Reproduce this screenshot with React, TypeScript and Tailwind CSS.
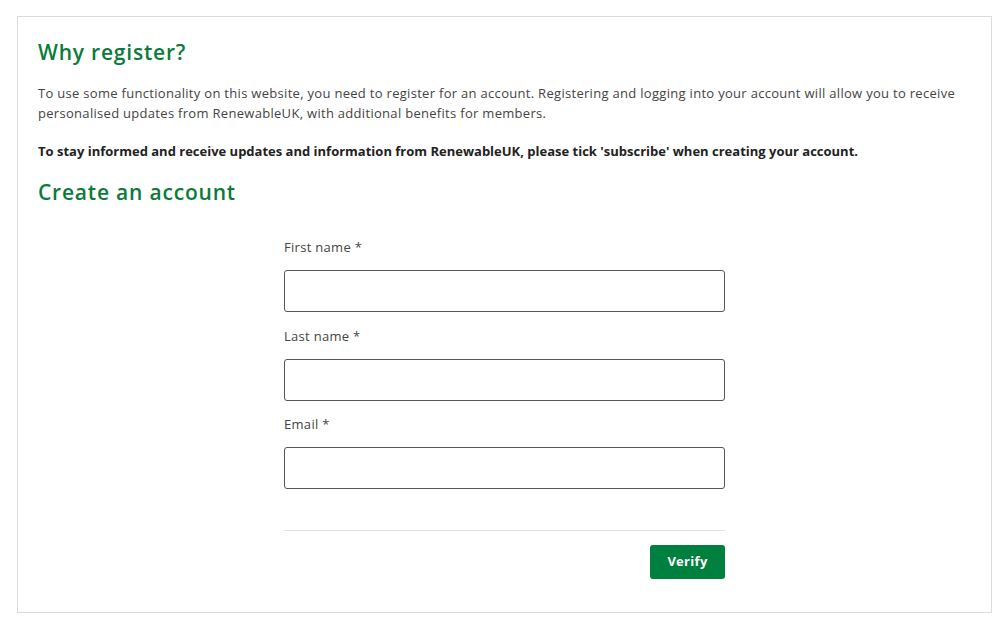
import React from "react";

const font = { fontFamily: '"Open Sans", "Liberation Sans", sans-serif' };

function Field({ label, className = "" }: { label: string; className?: string }) {
  return (
    <div className={"flex flex-col " + className}>
      <label className="text-[13px] leading-[20px] tracking-[0.3px] text-[#444] mb-[13px]">{label}</label>
      <input className="h-[42px] w-full rounded-[3px] border border-[#555] bg-white" />
    </div>
  );
}

export default function App() {
  return (
    <div className="bg-white min-h-[628px] pt-[16px]" style={font}>
      <div className="ml-[17px] w-[975px] h-[597px] border border-[#dcdcdf] px-[20px] pt-[22px]">
        <h2 className="text-[21px] leading-[26px] tracking-[0.8px] font-semibold text-[#0b7a3b]">Why register?</h2>
        <p className="mt-[18px] text-[13px] leading-[20px] tracking-[0.3px] text-[#444]">
          To use some functionality on this website, you need to register for an account. Registering and logging into your account will allow you to receive personalised updates from RenewableUK, with additional benefits for members.
        </p>
        <p className="mt-[18px] text-[13px] leading-[20px] font-bold text-[#222]">
          To stay informed and receive updates and information from RenewableUK, please tick 'subscribe' when creating your account.
        </p>
        <h2 className="mt-[18px] text-[21px] leading-[26px] tracking-[0.8px] font-semibold text-[#0b7a3b]">Create an account</h2>
        <div className="mx-auto mt-[32px] w-[441px] flex flex-col">
          <Field label="First name *" />
          <Field label="Last name *" className="mt-[14px]" />
          <Field label="Email *" className="mt-[13px]" />
          <div className="mt-[41px] border-t border-[#e2e2e2] pt-[14px] flex justify-end">
            <button className="h-[34px] w-[75px] rounded-[3px] bg-[#00803e] text-white text-[13px] font-bold tracking-[0.3px]">Verify</button>
          </div>
        </div>
      </div>
    </div>
  );
}
